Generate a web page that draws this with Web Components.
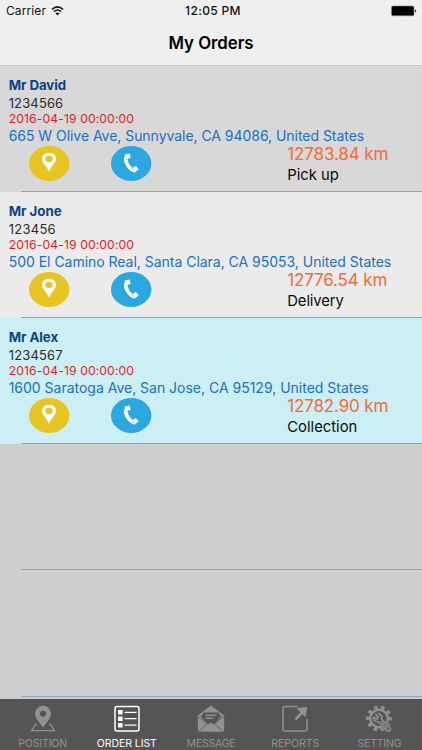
<!DOCTYPE html>
<html lang="en"><head><meta charset="utf-8"><title>My Orders</title>
<style>
html,body{margin:0;height:750px;overflow:hidden;background:#cfcfcf}
body{font-family:Inter,"Liberation Sans",sans-serif}
</style></head><body>
<orders-app></orders-app>
<script>
// A line of text tracked to an exact advance width.
class FitText extends HTMLElement{
  constructor(){super();this.attachShadow({mode:'open'}).innerHTML='<style>:host{display:block;white-space:nowrap}span{display:inline-block}</style><span><slot></slot></span>';}
  connectedCallback(){
    const w=+this.getAttribute('w'),s=this.shadowRoot.querySelector('span');
    const r=s.getBoundingClientRect().width;
    if(w&&r)s.style.letterSpacing=((w-r)/(this.textContent.length-1)).toFixed(3)+'px';
  }
}
class StatusBar extends HTMLElement{
  constructor(){super();this.attachShadow({mode:'open'}).innerHTML=`<style>
  :host{display:grid;grid-template-columns:1fr auto 1fr;height:22px;align-items:center;padding:0 5px 0 6px;box-sizing:border-box;font-size:12px;line-height:22px;color:#111}
  .l{display:flex;align-items:center;gap:5px}.c{font-weight:550;padding-left:3px}.r{display:flex;justify-content:flex-end}svg{display:block}
  </style><div class="l"><fit-text w="40">Carrier</fit-text><svg width="13" height="10" viewBox="0 0 12 10" fill="none" stroke="#111" stroke-width="1.5"><path d="M.5 3.400Q6-1.600 11.500 3.400M2.400 5.700Q6 2.300 9.600 5.700"/><path d="M6 9.500L3.900 7.300Q6 5.500 8.100 7.300Z" fill="#111" stroke="none"/></svg></div>
  <fit-text class="c" w="55.500">12:05 PM</fit-text>
  <div class="r"><svg width="26" height="12" viewBox="0 0 26 12"><rect x=".5" y="1" width="22.500" height="9.800" rx="1.500" fill="#000" stroke="#888" stroke-width=".6"/><path d="M24 4.600q1.200.200 1.200 1.400t-1.200 1.400z" fill="#222"/></svg></div>`;}
}
class NavBar extends HTMLElement{
  constructor(){super();this.attachShadow({mode:'open'}).innerHTML=`<style>:host{display:flex;justify-content:center;height:43px;box-sizing:border-box;font-size:16.800px;font-weight:600;line-height:43px;color:#000}</style><fit-text w="85">My Orders</fit-text>`;}
}
class RoundAction extends HTMLElement{
  constructor(){super();
    const pin='<path fill="#fff" fill-rule="evenodd" d="M20 6.800C15.600 6.800 13 9.600 13 13c0 4.300 4.800 6.500 7 13 2.200-6.500 7-8.700 7-13C27 9.600 24.400 6.800 20 6.800Zm0 2.900c2.300 0 3.800 1.300 3.800 3.200s-1.500 3.200-3.800 3.200-3.800-1.300-3.800-3.200 1.500-3.200 3.800-3.200Z"/>';
    const phone='<g fill="none" stroke="#fff"><path stroke-width="3.600" d="M15 11C13.800 17 18.500 23.200 23.500 24.800"/><path stroke-width="4.800" d="M14 10.800L19.200 9.800M21.900 25L26.200 21.500"/></g><path fill="none" stroke="#2ba8e0" stroke-width=".5" d="M14.500 13.500L19.800 12.400M20.600 21.600L23.600 25.500"/>';
    const p=this.getAttribute('kind')==='pin';
    this.attachShadow({mode:'open'}).innerHTML=`<style>:host{display:block;width:41px;height:36px}svg{display:block}</style><svg width="41" height="36" viewBox="0 0 41 36"><ellipse cx="20.200" cy="17.500" rx="20.200" ry="17.500" fill="${p?'#e6c522':'#2ba8e0'}"/>${p?pin:phone}</svg>`;}
}
class OrderRow extends HTMLElement{
  connectedCallback(){
    const a=n=>this.getAttribute(n);
    this.attachShadow({mode:'open'}).innerHTML=`<style>
    :host{display:flex;flex-direction:column;height:126.200px;box-sizing:border-box;background:var(--row);padding-top:10.200px;color:#2b2b2b}
    .t{padding-left:8.700px}
    .n{font-size:13.300px;font-weight:680;line-height:19px;color:#0d4484}
    .i{font-size:13px;line-height:17px}
    .d{font-size:12.200px;line-height:14px;color:#e01f26}
    .a{font-size:14px;line-height:20px;color:#2170c4}
    .f{display:grid;grid-template-columns:81.500px 176.500px 1fr;padding-left:29.300px;height:44px}
    .k{font-size:17px;line-height:18px;margin-top:-1px;color:#f26c36}
    .s{font-size:14.800px;line-height:24px;color:#0b0b0b}
    .line{margin:auto 0 0 21px;height:1px;background:#93a4b8}
    </style>
    ${a('name')?`<fit-text class="t n" w="${a('nw')}">${a('name')}</fit-text>
    <fit-text class="t i" w="${a('iw')}">${a('num')}</fit-text>
    <fit-text class="t d" w="125.300">2016-04-19 00:00:00</fit-text>
    <fit-text class="t a" w="${a('aw')}">${a('address')}</fit-text>
    <div class="f"><round-action kind="pin"></round-action><round-action kind="phone"></round-action>
    <div><fit-text class="k" w="${a('kw')}">${a('km')}</fit-text><fit-text class="s" w="${a('sw')}">${a('state')}</fit-text></div></div>`:''}
    <div class="line"></div>`;
  }
}
const icons={
position:'<g fill="none" stroke="currentColor"><path stroke-width="1.300" d="M8 19.500H6.500L2.600 25.600H25.400L21.500 19.500H20"/><circle cx="14" cy="8.800" r="5.500" stroke-width="5"/></g><path fill="currentColor" d="M6.700 12.500L14 22.500 21.300 12.500 16 13H12Z"/>',
list:'<g fill="none" stroke="currentColor"><rect x="2" y="1.500" width="24" height="24.500" rx="2" stroke-width="1.500"/><path stroke-width="1.300" d="M11.500 7.300H23.500M11.500 13.700H23.500M11.500 20.200H23.500"/></g><path fill="currentColor" d="M5 5h4.600v4.600H5zM5 11.400h4.600V16H5zM5 17.900h4.600v4.600H5z"/>',
message:'<path fill="currentColor" d="M.8 10.500L14 .5 27.200 10.500V25q0 1.800-2 1.800H2.800q-2 0-2-1.800Z"/><path fill="#555" d="M6 7.500H22V9.500L24.500 11 17 19.500 14 17.800 11 19.500 3.500 11 6 9.500Z"/><path fill="none" stroke="#555" stroke-width=".8" d="M1 11.500L10.500 18.500 2 26.500M27 11.500L17.500 18.500 26 26.500"/><path stroke="currentColor" stroke-width="1.500" d="M8.500 10.300H19.500M8.500 13.200H16.500"/>',
reports:'<g fill="none" stroke="currentColor"><path stroke-width="1.500" d="M16.500 1.500H4Q2 1.500 2 3.500V24Q2 26 4 26H24Q26 26 26 24V14"/><path stroke-width="2.600" d="M14.500 14.300L22 6.500"/></g><path fill="currentColor" d="M15.500 3.300L26.200 1.800 24.700 12.300Z"/>',
setting:'<g fill="none" stroke="currentColor"><circle cx="14" cy="13.500" r="8.800" stroke-width="2.400"/><circle cx="14" cy="13.500" r="11.200" stroke-width="3.400" stroke-dasharray="3.500 3.537" stroke-dashoffset="1.750"/></g><path d="M14 14L24 25" stroke="#555" stroke-width="6.500"/><path fill="none" stroke="currentColor" stroke-width="1.600" stroke-linejoin="round" d="M10.200 9.200L13.200 11.800 12 14 8.500 12.300Q8.600 16.800 13.300 16.700L21.400 25.300Q24.600 27.300 25.500 24.300 25.600 23 24.400 22L16.800 14.500Q17.500 9.500 12.800 8.200"/><path stroke="currentColor" stroke-width="1.300" d="M16 16.500L22.500 23.500"/>'};
class TabItem extends HTMLElement{
  connectedCallback(){this.attachShadow({mode:'open'}).innerHTML=`<style>:host{display:flex;flex-direction:column;align-items:center;padding-top:6px;color:#919191;font-size:10.500px;line-height:14px}:host([active]){color:#fff}svg{display:block;margin-bottom:4px}</style>
  <svg width="28" height="28" viewBox="0 0 28 28">${icons[this.getAttribute('icon')]}</svg><fit-text w="${this.getAttribute('w')}">${this.getAttribute('label')}</fit-text>`;}
}
class TabBar extends HTMLElement{
  constructor(){super();this.attachShadow({mode:'open'}).innerHTML=`<style>:host{display:grid;grid-template-columns:repeat(5,84.200px);height:51px;background:#555;justify-content:center;box-shadow:0 -2px #c5d0d3}</style>
  <tab-item icon="position" label="POSITION" w="49"></tab-item><tab-item icon="list" label="ORDER LIST" w="60" active></tab-item><tab-item icon="message" label="MESSAGE" w="49"></tab-item><tab-item icon="reports" label="REPORTS" w="48"></tab-item><tab-item icon="setting" label="SETTING" w="44"></tab-item>`;}
}
class OrdersApp extends HTMLElement{
  constructor(){super();this.attachShadow({mode:'open'}).innerHTML=`<style>
  :host{display:grid;grid-template-rows:65.700px 633.300px 51px;height:750px;width:422px;overflow:hidden}
  header{background:#efefef;box-shadow:inset 0 -1px #c8c8c8}main{overflow:hidden}tab-bar{z-index:1}
  </style><header><status-bar></status-bar><nav-bar></nav-bar></header>
  <main>
  <order-row style="--row:#d8d8d8" name="Mr David" nw="57.500" num="1234566" iw="54.500" address="665 W Olive Ave, Sunnyvale, CA 94086, United States" aw="355.500" km="12783.84 km" kw="101" state="Pick up" sw="51.500"></order-row>
  <order-row style="--row:#ebebeb" name="Mr Jone" nw="53" num="123456" iw="47" address="500 El Camino Real, Santa Clara, CA 95053, United States" aw="382.500" km="12776.54 km" kw="100" state="Delivery" sw="56.500"></order-row>
  <order-row style="--row:#cceff5" name="Mr Alex" nw="49.500" num="1234567" iw="54" address="1600 Saratoga Ave, San Jose, CA 95129, United States" aw="360" km="12782.90 km" kw="101" state="Collection" sw="70"></order-row>
  <order-row></order-row><order-row></order-row></main><tab-bar></tab-bar>`;}
}
customElements.define('fit-text',FitText);
customElements.define('status-bar',StatusBar);
customElements.define('nav-bar',NavBar);
customElements.define('round-action',RoundAction);
customElements.define('order-row',OrderRow);
customElements.define('tab-item',TabItem);
customElements.define('tab-bar',TabBar);
customElements.define('orders-app',OrdersApp);
</script></body></html>
